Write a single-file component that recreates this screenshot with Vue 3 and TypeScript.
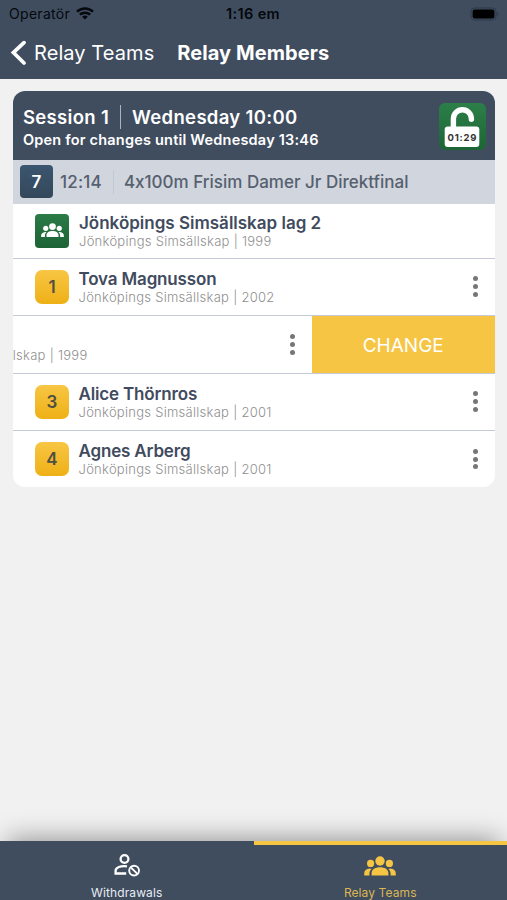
<script setup lang="ts">
interface Member {
  id: number
  badge: string
  name: string
  club: string
  kind: 'team' | 'leg'
  open?: boolean
}

const members: Member[] = [
  { id: 0, badge: '', name: 'Jönköpings Simsällskap lag 2', club: 'Jönköpings Simsällskap | 1999', kind: 'team' },
  { id: 1, badge: '1', name: 'Tova Magnusson', club: 'Jönköpings Simsällskap | 2002', kind: 'leg' },
  { id: 2, badge: '', name: '', club: 'Jönköpings Simsällskap | 1999', kind: 'leg', open: true },
  { id: 3, badge: '3', name: 'Alice Thörnros', club: 'Jönköpings Simsällskap | 2001', kind: 'leg' },
  { id: 4, badge: '4', name: 'Agnes Arberg', club: 'Jönköpings Simsällskap | 2001', kind: 'leg' },
]
</script>

<template>
  <div class="screen">
    <header class="top">
      <div class="status">
        <span class="carrier">Operatör</span>
        <svg class="wifi" viewBox="0 0 18 13" width="18" height="13">
          <path d="M1 4.6a11.6 11.6 0 0 1 16 0M3.9 7.7a7.4 7.4 0 0 1 10.2 0" fill="none" stroke="#05080c" stroke-width="2.5" />
          <path d="M9 12.6 6.2 9.8a4 4 0 0 1 5.6 0z" fill="#05080c" />
        </svg>
        <span class="clock">1:16 em</span>
        <svg class="battery" viewBox="0 0 30 14" width="30" height="14">
          <rect x="1" y="1" width="25" height="12" rx="3.6" fill="none" stroke="#2c3948" stroke-width="1" />
          <rect x="2.6" y="2.6" width="21.8" height="8.8" rx="2.2" fill="#000" />
          <path d="M27.4 5v4c1.4-.6 1.4-3.4 0-4z" fill="#2c3948" />
        </svg>
      </div>
      <div class="navbar">
        <svg class="chev" viewBox="0 0 16 26" width="16" height="26">
          <path d="M14 2.6 3.4 12.6 14 23" fill="none" stroke="#fff" stroke-width="3.7" stroke-linecap="round" stroke-linejoin="miter" />
        </svg>
        <span class="back">Relay Teams</span>
        <span class="title">Relay Members</span>
      </div>
    </header>

    <main class="content">
      <section class="card">
        <div class="session">
          <div class="session-text">
            <div class="session-line">
              <span>Session 1</span><i class="bar"></i><span>Wednesday 10:00</span>
            </div>
            <div class="session-sub">Open for changes until Wednesday 13:46</div>
          </div>
          <div class="lock">
            <svg viewBox="0 0 47 47" width="47" height="47">
              <path d="M14.400 27V15.700a9 9 0 0 1 18 0v.500" fill="none" stroke="#fff" stroke-width="5.400" stroke-linecap="round" />
              <rect x="5.700" y="23.600" width="34.600" height="20.400" rx="3" fill="#fff" />
            </svg>
            <span class="lock-time">01:29</span>
          </div>
        </div>
        <div class="event">
          <span class="num">7</span>
          <span class="time">12:14</span>
          <i class="bar soft"></i>
          <span>4x100m Frisim Damer Jr Direktfinal</span>
        </div>
        <div v-for="m in members" :key="m.id" class="row" :class="[m.kind, { open: m.open }]">
          <div class="slide">
            <span class="badge">
              <svg v-if="m.kind === 'team'" viewBox="0 0 32 20" width="23" height="14.400" fill="#fff">
                <circle cx="16" cy="5" r="4.700" /><circle cx="6.600" cy="7.400" r="3.600" /><circle cx="25.400" cy="7.400" r="3.600" />
                <path d="M7.600 19.400v-2.200c0-4 3.800-6 8.400-6s8.400 2 8.400 6v2.200zM.2 19.400v-2c0-2.600 2-4.400 5.400-4.800q1.200 0 2 .4C6.200 14.200 5.400 15.800 5.400 17.600v1.800zM31.800 19.400v-2c0-2.600-2-4.400-5.400-4.800q-1.200 0-2 .4c1.400 1.200 2.200 2.800 2.200 4.600v1.800z" />
              </svg>
              <template v-else>{{ m.badge }}</template>
            </span>
            <div class="who">
              <div class="name">{{ m.name }}</div>
              <div class="club">{{ m.club }}</div>
            </div>
            <span v-if="m.kind === 'leg'" class="dots"><i></i><i></i><i></i></span>
          </div>
          <button v-if="m.open" class="change" type="button">CHANGE</button>
        </div>
      </section>
    </main>

    <nav class="tabs">
      <a class="tab">
        <svg viewBox="0 0 28 25" width="28" height="25" fill="none" stroke="#fff" stroke-width="2.300">
          <circle cx="11.500" cy="6" r="3.900" />
          <path d="M14 13.300C7.500 12.200 2.600 14.800 2.600 17.800v2.700h10.600" />
          <circle cx="21.100" cy="17.600" r="4.900" stroke-width="1.900" /><path d="m17.800 14.300 6.600 6.600" stroke-width="1.900" />
        </svg>
        <span>Withdrawals</span>
      </a>
      <a class="tab active">
        <svg viewBox="0 0 32 20" width="32" height="20" fill="#f6c544">
          <circle cx="16" cy="5" r="4.700" /><circle cx="6.600" cy="7.400" r="3.600" /><circle cx="25.400" cy="7.400" r="3.600" />
          <path d="M7.600 19.400v-2.200c0-4 3.800-6 8.400-6s8.400 2 8.400 6v2.200zM.2 19.400v-2c0-2.600 2-4.400 5.400-4.800q1.200 0 2 .4C6.200 14.200 5.400 15.800 5.400 17.600v1.800zM31.800 19.400v-2c0-2.600-2-4.400-5.400-4.800q-1.200 0-2 .4c1.400 1.200 2.200 2.800 2.200 4.600v1.800z" />
        </svg>
        <span>Relay Teams</span>
      </a>
    </nav>
  </div>
</template>

<style>
body { background: #f1f1f1; }
</style>
<style scoped>
.screen { width: 507px; height: 900px; display: flex; flex-direction: column; overflow: hidden; background: #f1f1f1; font-family: Inter, "Liberation Sans", sans-serif; font-feature-settings: "calt" 0; }
.screen, .screen * { box-sizing: border-box; white-space: nowrap; }
.top { height: 79px; flex: none; background: #3f4d5f; }
.status { height: 27px; display: flex; align-items: center; padding: 0 7px 0 9px; color: #05080c; font-size: 14px; }
.carrier { letter-spacing: .3px; }
.wifi { margin-left: 6px; }
.clock { margin-left: 132px; font-weight: 600; font-size: 14.500px; letter-spacing: .35px; }
.battery { margin-left: auto; }
.navbar { height: 52px; display: flex; align-items: center; padding-left: 10px; color: #fff; font-size: 20px; line-height: 24px; letter-spacing: .08px; }
.back { margin-left: 8px; }
.title { margin-left: 23px; font-weight: 700; }
.content { flex: 1; min-height: 0; padding: 12px 12px 0 13px; }
.card { height: 396px; border-radius: 12px; overflow: hidden; background: #fff; }
.session { height: 69px; background: #3f4d5f; color: #fff; display: flex; justify-content: space-between; padding: 12px 9px 0 10px; }
.session-line { display: flex; align-items: center; height: 28px; font-size: 18.500px; font-weight: 600; letter-spacing: .32px; }
.bar { width: 1px; height: 24px; background: #aab3bf; margin: 0 11px; }
.session-sub { font-size: 14.500px; font-weight: 600; line-height: 18px; letter-spacing: .2px; }
.lock { width: 47px; height: 47px; border-radius: 6px; background: linear-gradient(#2c7f48, #1d6536); position: relative; }
.lock svg { display: block; }
.lock-time { position: absolute; left: 5.700px; width: 35.400px; top: 28.500px; text-align: center; font-size: 9.500px; line-height: 12px; font-weight: 700; color: #333; letter-spacing: .8px; }
.event { height: 43.500px; background: #d0d5de; display: flex; align-items: center; padding-left: 7px; color: #56606e; font-size: 17px; font-weight: 500; }
.num { width: 33px; height: 33px; border-radius: 4px; background: linear-gradient(#3b5670, #34485a); color: #fff; display: grid; place-items: center; font-weight: 600; }
.time { margin-left: 7px; letter-spacing: .2px; }
.soft { background: #c0c6d2; margin: 0 10px 0 11px; }
.row { height: 57.500px; border-bottom: 1.500px solid #c6c9d8; position: relative; overflow: hidden; display: flex; }
.row.team { height: 55px; }
.row:last-child { border-bottom: 0; height: 56px; }
.slide { width: 482px; flex: none; display: flex; align-items: center; padding: 0 17px 0 22px; }
.open .slide { margin-left: -183.500px; }
.badge { width: 34px; height: 34px; flex: none; border-radius: 7px; background: linear-gradient(#f8c644, #eeb016); color: #4f4f42; font-size: 17px; font-weight: 600; display: grid; place-items: center; }
.team .badge { border-radius: 4px; background: linear-gradient(#2b7b47, #1d6336); }
.who { margin-left: 9.500px; padding-top: 1.500px; flex: 1; }
.team .who { margin-left: 10px; }
.name { height: 20px; line-height: 20px; font-size: 17px; font-weight: 600; color: #414b5e; letter-spacing: -.16px; }
.team .name { letter-spacing: 0; }
.club { height: 17px; line-height: 17px; font-size: 13px; font-weight: 300; color: #8f8f8f; letter-spacing: .27px; }
.dots { display: flex; flex-direction: column; gap: 2.800px; }
.dots i { width: 5px; height: 5px; border-radius: 50%; background: #777; }
.change { width: 183.500px; flex: none; border: 0; background: #f6c544; color: #fff; font: 400 19px Inter, sans-serif; padding: 2px 0 0; }
.tabs { height: 59.500px; flex: none; display: flex; background: #3f4d5f; box-shadow: 0 -10px 26px -8px rgba(0, 0, 0, .4); color: #e8ecf2; }
.tab { flex: 1; display: flex; flex-direction: column; align-items: center; justify-content: space-between; padding-top: 12.500px; font-size: 12px; line-height: 15px; letter-spacing: .1px; }
.active { border-top: 4px solid #f6c544; padding-top: 11px; color: #dcb653; }
</style>
